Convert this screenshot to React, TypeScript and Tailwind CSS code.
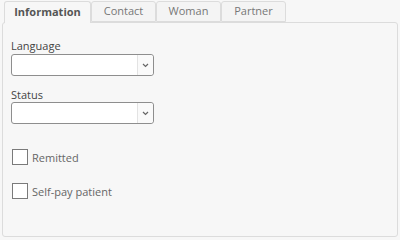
import React from "react";

function Select() {
  return (
    <div className="flex h-[22px] w-[143px] rounded-[3px] border border-[#8e8e8e] bg-white">
      <div className="flex-1" />
      <div className="flex w-[16px] items-center justify-center rounded-r-[3px] border-l border-[#e3e3e3] bg-[#fafafa]">
        <svg width="7" height="5" viewBox="0 0 7 5">
          <path d="M1 1 L3.5 3.5 L6 1" fill="none" stroke="#666" strokeWidth="1.2" />
        </svg>
      </div>
    </div>
  );
}

function Check({ label }: { label: string }) {
  return (
    <div className="flex h-[16px] items-center gap-[4px]">
      <div className="h-[16px] w-[16px] border border-[#7a7a7a] bg-white" />
      <span className="text-[11px] leading-[15px] text-[#666]">{label}</span>
    </div>
  );
}

export default function App() {
  const tabs = ["Contact", "Woman", "Partner"];
  return (
    <div
      className="h-[240px] w-[400px] bg-[#f7f7f7] pl-[2px] pr-[2px] pt-[1px]"
      style={{ fontFamily: "'Open Sans', 'Noto Sans', sans-serif" }}
    >
      <div className="flex pl-[2px]">
        <div className="relative z-10 -mb-px flex h-[22px] w-[87px] items-center justify-center rounded-t-[3px] border border-b-0 border-[#dcdcdc] bg-[#f7f7f7] text-[11px] font-bold text-[#555]">
          Information
        </div>
        {tabs.map((t) => (
          <div
            key={t}
            className="flex h-[21px] w-[65px] items-center justify-center rounded-t-[3px] border border-[#dcdcdc] bg-[#f4f4f4] text-[11px] text-[#777]"
          >
            {t}
          </div>
        ))}
      </div>
      <div className="h-[215px] rounded-[3px] border border-[#dcdcdc] bg-[#f7f7f7] px-[8px] pt-[15px]">
        <div className="text-[11px] leading-[15px] text-[#444]">Language</div>
        <div className="mt-[1px]">
          <Select />
        </div>
        <div className="mt-[11px] text-[11px] leading-[15px] text-[#444]">Status</div>
        <div className="mt-0">
          <Select />
        </div>
        <div className="mt-[25px] flex flex-col gap-[18px] pl-[1px]">
          <Check label="Remitted" />
          <Check label="Self-pay patient" />
        </div>
      </div>
    </div>
  );
}
